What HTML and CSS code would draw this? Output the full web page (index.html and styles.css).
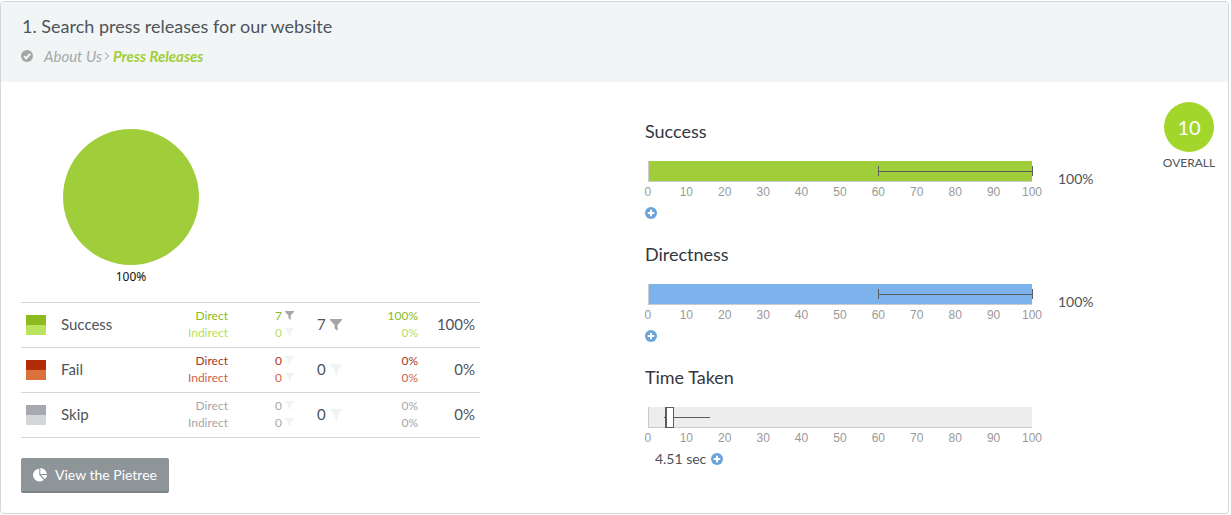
FILE: index.html
```html
<!DOCTYPE html>
<html lang="en">
<head>
<meta charset="utf-8">
<title>Search press releases for our website</title>
<link rel="stylesheet" href="styles.css">
</head>
<body>
<svg class="defs" aria-hidden="true">
  <symbol id="funnel" viewBox="0 0 12 12"><path d="M0 0h12v1L7.600 6v6L4.600 9.400V6L0 1z"/></symbol>
  <symbol id="plus" viewBox="0 0 12 12"><circle cx="6" cy="6" r="6"/><path d="M6 2.700v6.600M2.700 6h6.600" stroke="#fff" stroke-width="2"/></symbol>
</svg>
<main class="card">
  <header class="card-head">
    <h1 class="title">1. Search press releases for our website</h1>
    <p class="path">
      <svg class="path-icon" viewBox="0 0 12 12"><circle cx="6" cy="6" r="6"/><path d="M3 6.200l2.200 2.100L9.200 4" fill="none" stroke="#f1f5f6" stroke-width="2"/></svg>
      <em>About Us</em><svg class="chevron" viewBox="0 0 6 10"><path d="M1 1.500L4.500 5 1 8.500"/></svg><em class="target">Press Releases</em>
    </p>
  </header>
  <div class="card-body">
    <section class="outcome">
      <figure class="pie">
        <svg class="pie-disc" viewBox="0 0 136 136"><circle cx="68" cy="68" r="68"/></svg>
        <figcaption>100%</figcaption>
      </figure>
      <table class="results">
        <tbody>
          <tr class="success">
            <td class="swatch-cell"><span class="swatch"></span></td>
            <th scope="row">Success</th>
            <td class="split kinds"><div class="direct">Direct</div><div class="indirect">Indirect</div></td>
            <td class="split counts"><div class="direct">7 <svg class="funnel on"><use href="#funnel"/></svg></div><div class="indirect">0 <svg class="funnel"><use href="#funnel"/></svg></div></td>
            <td class="total">7 <svg class="funnel on"><use href="#funnel"/></svg></td>
            <td class="split shares"><div class="direct">100%</div><div class="indirect">0%</div></td>
            <td class="share">100%</td>
          </tr>
          <tr class="fail">
            <td class="swatch-cell"><span class="swatch"></span></td>
            <th scope="row">Fail</th>
            <td class="split kinds"><div class="direct">Direct</div><div class="indirect">Indirect</div></td>
            <td class="split counts"><div class="direct">0 <svg class="funnel"><use href="#funnel"/></svg></div><div class="indirect">0 <svg class="funnel"><use href="#funnel"/></svg></div></td>
            <td class="total">0 <svg class="funnel"><use href="#funnel"/></svg></td>
            <td class="split shares"><div class="direct">0%</div><div class="indirect">0%</div></td>
            <td class="share">0%</td>
          </tr>
          <tr class="skip">
            <td class="swatch-cell"><span class="swatch"></span></td>
            <th scope="row">Skip</th>
            <td class="split kinds"><div class="direct">Direct</div><div class="indirect">Indirect</div></td>
            <td class="split counts"><div class="direct">0 <svg class="funnel"><use href="#funnel"/></svg></div><div class="indirect">0 <svg class="funnel"><use href="#funnel"/></svg></div></td>
            <td class="total">0 <svg class="funnel"><use href="#funnel"/></svg></td>
            <td class="split shares"><div class="direct">0%</div><div class="indirect">0%</div></td>
            <td class="share">0%</td>
          </tr>
        </tbody>
      </table>
      <button class="pietree" type="button">
        <svg viewBox="0 0 14 14"><path d="M6.300 0.800V7l4.400 4.700A6.300 6.300 0 1 1 6.300 0.800z"/><path d="M7.300 0A6.500 6.500 0 0 1 13.800 6H7.300z"/><path d="M8 7h6a6 6 0 0 1-2.100 4.200z"/></svg>
        View the Pietree
      </button>
    </section>
    <section class="metrics">
      <article class="metric">
        <h2>Success</h2>
        <div class="metric-row">
          <div class="chart">
            <svg class="bar bar-success"><line x1="60%" x2="100%" y1="10" y2="10"/><line x1="60%" x2="60%" y1="5" y2="15"/><line x1="100%" x2="100%" y1="5" y2="15"/></svg>
            <ol class="ticks"><li>0</li><li>10</li><li>20</li><li>30</li><li>40</li><li>50</li><li>60</li><li>70</li><li>80</li><li>90</li><li>100</li></ol>
          </div>
          <output class="value">100%</output>
        </div>
        <div class="detail"><button class="more" type="button" aria-label="More about success"><svg><use href="#plus"/></svg></button></div>
      </article>
      <article class="metric">
        <h2>Directness</h2>
        <div class="metric-row">
          <div class="chart">
            <svg class="bar bar-direct"><line x1="60%" x2="100%" y1="10" y2="10"/><line x1="60%" x2="60%" y1="5" y2="15"/><line x1="100%" x2="100%" y1="5" y2="15"/></svg>
            <ol class="ticks"><li>0</li><li>10</li><li>20</li><li>30</li><li>40</li><li>50</li><li>60</li><li>70</li><li>80</li><li>90</li><li>100</li></ol>
          </div>
          <output class="value">100%</output>
        </div>
        <div class="detail"><button class="more" type="button" aria-label="More about directness"><svg><use href="#plus"/></svg></button></div>
      </article>
      <article class="metric">
        <h2>Time Taken</h2>
        <div class="metric-row">
          <div class="chart">
            <svg class="bar bar-time"><line x1="4%" x2="16%" y1="10" y2="10"/><rect x="4.200%" y="0" width="2.200%" height="20"/><line x1="4.500%" x2="4.500%" y1="0" y2="20"/></svg>
            <ol class="ticks"><li>0</li><li>10</li><li>20</li><li>30</li><li>40</li><li>50</li><li>60</li><li>70</li><li>80</li><li>90</li><li>100</li></ol>
          </div>
          <span class="value"></span>
        </div>
        <div class="detail timed">4.51 sec <button class="more" type="button" aria-label="More about time taken"><svg><use href="#plus"/></svg></button></div>
      </article>
    </section>
    <aside class="overall"><span class="score">10</span><span class="score-label">OVERALL</span></aside>
  </div>
</main>
</body>
</html>
```
FILE: styles.css
```css
* { box-sizing: border-box; }
body { margin: 0; padding: 1px 2px 1px 0; background: #fff; color: #4d545a; font: 14px/20px Lato, sans-serif; }
.defs { display: none; }
svg { display: block; }
h1, h2, p, ol, figure { margin: 0; padding: 0; font-weight: 400; }
button { border: 0; padding: 0; font: inherit; cursor: pointer; }
.card { border: 1px solid #d3d7d9; border-radius: 4px; overflow: hidden; }
.card-head { background: #f1f5f6; padding: 12px 20px 16px; }
.title { font-size: 18px; line-height: 24px; padding-left: 1px; }
.path { display: flex; align-items: center; margin-top: 8px; color: #a5a7a8; font-size: 15px; }
.path-icon { width: 12px; height: 12px; margin-right: 11px; fill: #a5a5a5; }
.chevron { width: 6px; height: 10px; margin: 0 3px 0 2px; fill: none; stroke: #8f9192; stroke-width: 1; }
.target { color: #a0ce3b; font-weight: 700; }
.card-body { display: grid; grid-template-columns: 12fr 10fr 52px; padding: 20px 13px 20px 20px; }
.pie { width: 136px; margin: 27px 0 0 42px; text-align: center; color: #111; font: 12px/20px "Noto Sans", sans-serif; }
.pie-disc { width: 136px; height: 136px; fill: #a0ce3a; }
.pie figcaption { padding-top: 2px; }
.results { width: 74%; max-width: 459px; margin-top: 15px; border-collapse: collapse; table-layout: fixed; border-bottom: 1px solid #d4d5d6; }
.results tr { height: 45px; border-top: 1px solid #d4d5d6; }
.results td, .results th { padding: 0 0 2px; font-weight: 400; text-align: left; }
.results .swatch-cell { width: 40px; padding: 0; }
.swatch { display: block; width: 20px; height: 20px; margin-left: 5px; }
.success .swatch { background: linear-gradient(#8cbb20 50%, #bbe360 50%); }
.fail .swatch { background: linear-gradient(#b22c05 50%, #d9723b 50%); }
.skip .swatch { background: linear-gradient(#a6a9b1 50%, #d3d7d9 50%); }
.results th, .results .total, .results .share { font-size: 15px; }
.split { font-size: 12px; line-height: 17px; }
.results .kinds, .results .shares, .results .share { text-align: right; }
.results .share { padding-right: 5px; }
.kinds { width: 80px; }
.counts { width: 66px; }
.total { width: 63px; }
.shares { width: 61px; }
.share { width: 62px; }
.counts div { display: flex; align-items: center; justify-content: flex-end; gap: 3px; }
.success .direct { color: #8cbb20; }
.success .indirect { color: #b6df5c; }
.fail .direct { color: #a83622; }
.fail .indirect { color: #cc6548; }
.skip .split { color: #a5a7a8; }
.funnel { display: inline-block; width: 9px; height: 9px; fill: #f0f2f3; }
.funnel.on { fill: #a2a5aa; }
.results .total { padding-left: 23px; }
.total .funnel { width: 12px; height: 12px; margin-bottom: 2px; vertical-align: middle; }
.pietree { display: flex; align-items: center; gap: 8px; height: 35px; margin-top: 20px; padding: 0 12px; border-bottom: 2px solid #7c8387; border-radius: 2px; background: #8d9599; color: #fff; }
.pietree svg { width: 14px; height: 14px; fill: #fff; }
.metrics { padding-left: 1px; }
.metric { height: 123px; padding-top: 17px; }
.metric h2 { font-size: 18px; line-height: 24px; color: #343842; }
.metric-row { display: flex; gap: 26px; margin: 18px 0 0 3px; }
.chart { flex: 1; }
.bar { width: 100%; height: 21px; overflow: visible; border-bottom: 1px solid #c9cbcc; border-left: 1px solid #c9cbcc; }
.bar line { stroke: #5a5d5e; shape-rendering: crispEdges; }
.bar rect { fill: #fff; stroke: #5a5d5e; shape-rendering: crispEdges; }
.bar-success { background: #a0ce3a; }
.bar-direct { background: #7cb3ec; }
.bar-time { background: #ededed; }
.ticks { display: flex; justify-content: space-between; list-style: none; color: #999; font: 12px/20px "Liberation Sans", sans-serif; }
.ticks li { display: flex; justify-content: center; width: 0; }
.value { width: 105px; padding-top: 8px; }
.detail { display: flex; align-items: center; height: 22px; gap: 5px; }
.timed { padding-left: 10px; }
.more { background: none; }
.more svg { width: 12px; height: 12px; fill: #6aa3d8; }
.overall { display: flex; flex-direction: column; align-items: center; }
.score { display: grid; place-items: center; width: 50px; height: 50px; border-radius: 50%; background: #a2d62a; color: #fff; font-size: 20px; }
.score-label { padding-top: 1px; font-size: 12px; }
```
